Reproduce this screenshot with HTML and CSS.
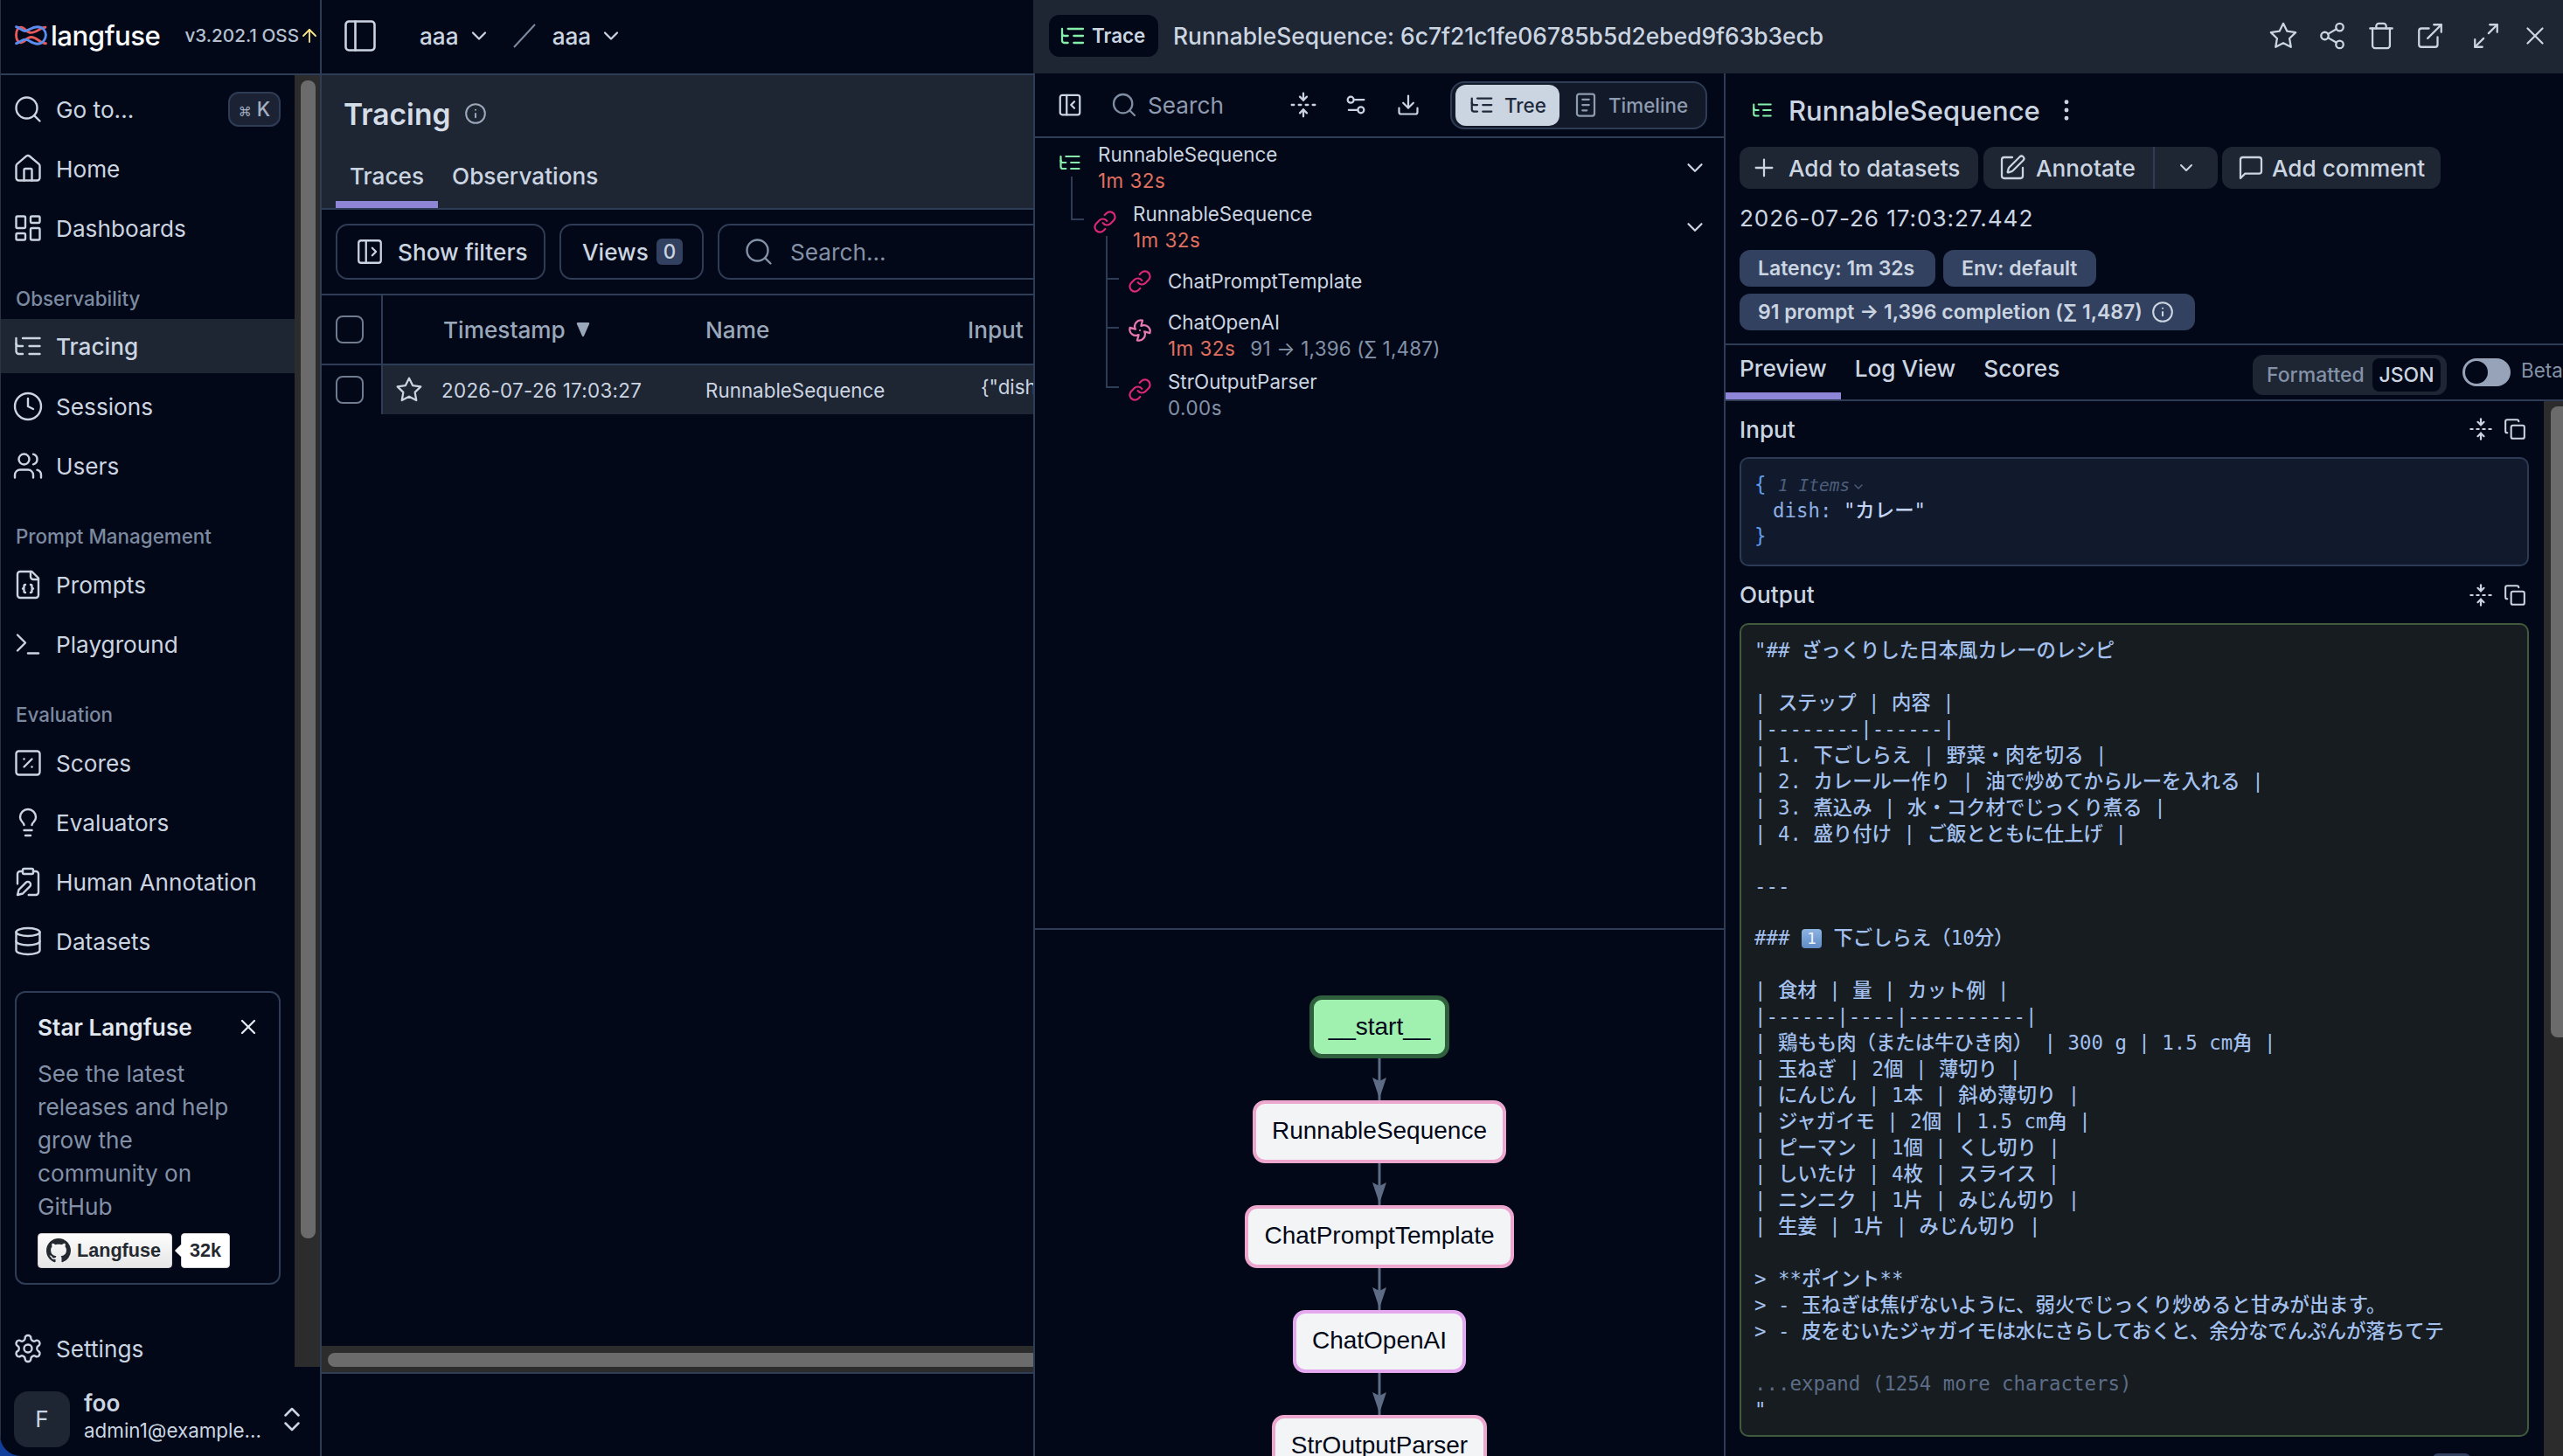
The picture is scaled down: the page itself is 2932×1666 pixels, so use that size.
FILE: index.html
```html
<!DOCTYPE html>
<html lang="en">
<head>
<meta charset="utf-8">
<title>Langfuse Tracing</title>
<link rel="stylesheet" href="styles.css">
</head>
<body>
<svg class="sprite" xmlns="http://www.w3.org/2000/svg">
<symbol id="search" viewBox="0 0 24 24"><circle cx="11" cy="11" r="8"/><path d="m21 21-4.3-4.3"/></symbol>
<symbol id="home" viewBox="0 0 24 24"><path d="M15 21v-8a1 1 0 0 0-1-1h-4a1 1 0 0 0-1 1v8"/><path d="M3 10a2 2 0 0 1 .709-1.528l7-5.999a2 2 0 0 1 2.582 0l7 5.999A2 2 0 0 1 21 10v9a2 2 0 0 1-2 2H5a2 2 0 0 1-2-2z"/></symbol>
<symbol id="dash" viewBox="0 0 24 24"><rect width="7" height="9" x="3" y="3" rx="1"/><rect width="7" height="5" x="14" y="3" rx="1"/><rect width="7" height="9" x="14" y="12" rx="1"/><rect width="7" height="5" x="3" y="16" rx="1"/></symbol>
<symbol id="tree" viewBox="0 0 24 24"><path d="M21 12h-8"/><path d="M21 6H8"/><path d="M21 18h-8"/><path d="M3 6v4c0 1.1.9 2 2 2h3"/><path d="M3 10v6c0 1.1.9 2 2 2h3"/></symbol>
<symbol id="clock" viewBox="0 0 24 24"><circle cx="12" cy="12" r="10"/><path d="M12 6v6l4 2"/></symbol>
<symbol id="users" viewBox="0 0 24 24"><path d="M16 21v-2a4 4 0 0 0-4-4H6a4 4 0 0 0-4 4v2"/><circle cx="9" cy="7" r="4"/><path d="M22 21v-2a4 4 0 0 0-3-3.87"/><path d="M16 3.13a4 4 0 0 1 0 7.75"/></symbol>
<symbol id="filejson" viewBox="0 0 24 24"><path d="M15 2H6a2 2 0 0 0-2 2v16a2 2 0 0 0 2 2h12a2 2 0 0 0 2-2V7Z"/><path d="M14 2v4a2 2 0 0 0 2 2h4"/><path d="M10 12a1 1 0 0 0-1 1v1a1 1 0 0 1-1 1 1 1 0 0 1 1 1v1a1 1 0 0 0 1 1"/><path d="M14 18a1 1 0 0 0 1-1v-1a1 1 0 0 1 1-1 1 1 0 0 1-1-1v-1a1 1 0 0 0-1-1"/></symbol>
<symbol id="terminal" viewBox="0 0 24 24"><path d="m4 17 6-6-6-6"/><path d="M12 19h8"/></symbol>
<symbol id="percent" viewBox="0 0 24 24"><rect width="18" height="18" x="3" y="3" rx="2"/><path d="m15 9-6 6"/><path d="M9 9h.01"/><path d="M15 15h.01"/></symbol>
<symbol id="bulb" viewBox="0 0 24 24"><path d="M15 14c.2-1 .7-1.7 1.5-2.5 1-.9 1.5-2.2 1.5-3.5A6 6 0 0 0 6 8c0 1 .2 2.2 1.5 3.5.7.7 1.3 1.5 1.5 2.5"/><path d="M9 18h6"/><path d="M10 22h4"/></symbol>
<symbol id="clipen" viewBox="0 0 24 24"><rect width="8" height="4" x="8" y="2" rx="1"/><path d="M10.4 12.6a2 2 0 0 1 3 3L8 21l-4 1 1-4Z"/><path d="M16 4h2a2 2 0 0 1 2 2v14a2 2 0 0 1-2 2h-5.5"/><path d="M4 13.5V6a2 2 0 0 1 2-2h2"/></symbol>
<symbol id="db" viewBox="0 0 24 24"><ellipse cx="12" cy="5" rx="9" ry="3"/><path d="M3 5V19A9 3 0 0 0 21 19V5"/><path d="M3 12A9 3 0 0 0 21 12"/></symbol>
<symbol id="gear" viewBox="0 0 24 24"><path d="M12.22 2h-.44a2 2 0 0 0-2 2v.18a2 2 0 0 1-1 1.73l-.43.25a2 2 0 0 1-2 0l-.15-.08a2 2 0 0 0-2.73.73l-.22.38a2 2 0 0 0 .73 2.73l.15.1a2 2 0 0 1 1 1.72v.51a2 2 0 0 1-1 1.74l-.15.09a2 2 0 0 0-.73 2.73l.22.38a2 2 0 0 0 2.73.73l.15-.08a2 2 0 0 1 2 0l.43.25a2 2 0 0 1 1 1.73V20a2 2 0 0 0 2 2h.44a2 2 0 0 0 2-2v-.18a2 2 0 0 1 1-1.73l.43-.25a2 2 0 0 1 2 0l.15.08a2 2 0 0 0 2.73-.73l.22-.39a2 2 0 0 0-.73-2.73l-.15-.08a2 2 0 0 1-1-1.74v-.5a2 2 0 0 1 1-1.74l.15-.09a2 2 0 0 0 .73-2.73l-.22-.38a2 2 0 0 0-2.73-.73l-.15.08a2 2 0 0 1-2 0l-.43-.25a2 2 0 0 1-1-1.73V4a2 2 0 0 0-2-2z"/><circle cx="12" cy="12" r="3"/></symbol>
<symbol id="updown" viewBox="0 0 24 24"><path d="m7 15 5 5 5-5"/><path d="m7 9 5-5 5 5"/></symbol>
<symbol id="panel" viewBox="0 0 24 24"><rect width="18" height="18" x="3" y="3" rx="2"/><path d="M9 3v18"/></symbol>
<symbol id="panelopen" viewBox="0 0 24 24"><rect width="18" height="18" x="3" y="3" rx="2"/><path d="M9 3v18"/><path d="m14 9 3 3-3 3"/></symbol>
<symbol id="panelclose" viewBox="0 0 24 24"><rect width="18" height="18" x="3" y="3" rx="2"/><path d="M9 3v18"/><path d="m16 15-3-3 3-3"/></symbol>
<symbol id="info" viewBox="0 0 24 24"><circle cx="12" cy="12" r="10"/><path d="M12 16v-4"/><path d="M12 8h.01"/></symbol>
<symbol id="chev" viewBox="0 0 24 24"><path d="m6 9 6 6 6-6"/></symbol>
<symbol id="star" viewBox="0 0 24 24"><path d="M12 2l3.09 6.26L22 9.27l-5 4.87 1.18 6.88L12 17.77l-6.18 3.25L7 14.14 2 9.27l6.91-1.01z"/></symbol>
<symbol id="share" viewBox="0 0 24 24"><circle cx="18" cy="5" r="3"/><circle cx="6" cy="12" r="3"/><circle cx="18" cy="19" r="3"/><path d="M8.59 13.51l6.83 3.98"/><path d="M15.41 6.51l-6.82 3.98"/></symbol>
<symbol id="trash" viewBox="0 0 24 24"><path d="M3 6h18"/><path d="M19 6v14c0 1-1 2-2 2H7c-1 0-2-1-2-2V6"/><path d="M8 6V4c0-1 1-2 2-2h4c1 0 2 1 2 2v2"/></symbol>
<symbol id="ext" viewBox="0 0 24 24"><path d="M15 3h6v6"/><path d="M10 14 21 3"/><path d="M18 13v6a2 2 0 0 1-2 2H5a2 2 0 0 1-2-2V8a2 2 0 0 1 2-2h6"/></symbol>
<symbol id="expand" viewBox="0 0 24 24"><path d="M15 3h6v6"/><path d="M9 21H3v-6"/><path d="M21 3l-7 7"/><path d="M3 21l7-7"/></symbol>
<symbol id="x" viewBox="0 0 24 24"><path d="M18 6 6 18"/><path d="m6 6 12 12"/></symbol>
<symbol id="fold" viewBox="0 0 24 24"><path d="M12 22v-6"/><path d="M12 8V2"/><path d="M4 12H2"/><path d="M10 12H8"/><path d="M16 12h-2"/><path d="M22 12h-2"/><path d="m15 19-3-3-3 3"/><path d="m15 5-3 3-3-3"/></symbol>
<symbol id="sliders" viewBox="0 0 24 24"><path d="M20 7h-9"/><path d="M14 17H5"/><circle cx="17" cy="17" r="3"/><circle cx="7" cy="7" r="3"/></symbol>
<symbol id="download" viewBox="0 0 24 24"><path d="M21 15v4a2 2 0 0 1-2 2H5a2 2 0 0 1-2-2v-4"/><path d="m7 10 5 5 5-5"/><path d="M12 15V3"/></symbol>
<symbol id="timeline" viewBox="0 0 24 24"><rect width="16" height="20" x="4" y="2" rx="2"/><path d="M9 7h6"/><path d="M9 12h6"/><path d="M9 17h4"/></symbol>
<symbol id="link" viewBox="0 0 24 24"><path d="M10 13a5 5 0 0 0 7.54.54l3-3a5 5 0 0 0-7.07-7.07l-1.72 1.71"/><path d="M14 11a5 5 0 0 0-7.54-.54l-3 3a5 5 0 0 0 7.07 7.07l1.71-1.71"/></symbol>
<symbol id="fan" viewBox="0 0 24 24"><path d="M10.827 16.379a6.082 6.082 0 0 1-8.618-7.002l5.412 1.45a6.082 6.082 0 0 1 7.002-8.618l-1.45 5.412a6.082 6.082 0 0 1 8.618 7.002l-5.412-1.45a6.082 6.082 0 0 1-7.002 8.618l1.45-5.412Z"/><path d="M12 12v.01"/></symbol>
<symbol id="plus" viewBox="0 0 24 24"><path d="M5 12h14"/><path d="M12 5v14"/></symbol>
<symbol id="pen" viewBox="0 0 24 24"><path d="M12 3H5a2 2 0 0 0-2 2v14a2 2 0 0 0 2 2h14a2 2 0 0 0 2-2v-7"/><path d="M18.375 2.625a1 1 0 0 1 3 3l-9.013 9.014a2 2 0 0 1-.853.505l-2.873.84a.5.5 0 0 1-.62-.62l.84-2.873a2 2 0 0 1 .506-.852z"/></symbol>
<symbol id="msg" viewBox="0 0 24 24"><path d="M21 15a2 2 0 0 1-2 2H7l-4 4V5a2 2 0 0 1 2-2h14a2 2 0 0 1 2 2z"/></symbol>
<symbol id="dots" viewBox="0 0 24 24"><circle cx="12" cy="5" r="1"/><circle cx="12" cy="12" r="1"/><circle cx="12" cy="19" r="1"/></symbol>
<symbol id="copy" viewBox="0 0 24 24"><rect width="14" height="14" x="8" y="8" rx="2"/><path d="M4 16c-1.1 0-2-.9-2-2V4c0-1.1.9-2 2-2h10c1.1 0 2 .9 2 2"/></symbol>
<symbol id="up" viewBox="0 0 24 24"><path d="m5 12 7-7 7 7"/><path d="M12 19V5"/></symbol>
<symbol id="github" viewBox="0 0 16 16"><path d="M8 0C3.58 0 0 3.58 0 8c0 3.54 2.29 6.53 5.47 7.59.4.07.55-.17.55-.38 0-.19-.01-.82-.01-1.49-2.01.37-2.53-.49-2.69-.94-.09-.23-.48-.94-.82-1.13-.28-.15-.68-.52-.01-.53.63-.01 1.08.58 1.23.82.72 1.21 1.87.87 2.33.66.07-.52.28-.87.51-1.07-1.78-.2-3.64-.89-3.64-3.95 0-.87.31-1.59.82-2.15-.08-.2-.36-1.02.08-2.12 0 0 .67-.21 2.2.82.64-.18 1.32-.27 2-.27.68 0 1.36.09 2 .27 1.53-1.04 2.2-.82 2.2-.82.44 1.1.16 1.92.08 2.12.51.56.82 1.27.82 2.15 0 3.07-1.87 3.75-3.65 3.95.29.25.54.73.54 1.48 0 1.07-.01 1.93-.01 2.2 0 .21.15.46.55.38A8.013 8.013 0 0016 8c0-4.42-3.58-8-8-8z"/></symbol>
</svg>

<div class="app">
  <aside class="sidebar">
    <header class="brand">
      <svg class="logo" viewBox="0 0 36 24">
        <path class="logo-red" d="M34 3C28 3 25 9 18 9 13 9 11 3 7 3 3 3 1.500 7 1.500 11.500 1.500 16 3 20 7 20 11 20 13 14 18 14 25 14 28 21 34.500 21"/>
        <path class="logo-blue" d="M1.500 2.500C6 3 8 8 12 7 16 6 19 2.500 25 2.500 31 2.500 34.500 7 34.500 11.500 34.500 16 31 21.500 25 21.500 19 21.500 16 17 12 16.500 8 16 6 20 1.500 21"/>
      </svg>
      <span class="brand-name">langfuse</span>
      <span class="version">v3.202.1 OSS</span>
      <svg class="i version-up"><use href="#up"/></svg>
    </header>
    <div class="side-body">
      <nav class="nav">
        <a class="nav-item"><svg class="i s36"><use href="#search"/></svg><span>Go to...</span><kbd class="kbd"><small>⌘</small> K</kbd></a>
        <a class="nav-item"><svg class="i s36"><use href="#home"/></svg><span>Home</span></a>
        <a class="nav-item"><svg class="i s36"><use href="#dash"/></svg><span>Dashboards</span></a>
        <div class="nav-label">Observability</div>
        <a class="nav-item is-active"><svg class="i s36"><use href="#tree"/></svg><span>Tracing</span></a>
        <a class="nav-item"><svg class="i s36"><use href="#clock"/></svg><span>Sessions</span></a>
        <a class="nav-item"><svg class="i s36"><use href="#users"/></svg><span>Users</span></a>
        <div class="nav-label">Prompt Management</div>
        <a class="nav-item"><svg class="i s36"><use href="#filejson"/></svg><span>Prompts</span></a>
        <a class="nav-item"><svg class="i s36"><use href="#terminal"/></svg><span>Playground</span></a>
        <div class="nav-label">Evaluation</div>
        <a class="nav-item"><svg class="i s36"><use href="#percent"/></svg><span>Scores</span></a>
        <a class="nav-item"><svg class="i s36"><use href="#bulb"/></svg><span>Evaluators</span></a>
        <a class="nav-item"><svg class="i s36"><use href="#clipen"/></svg><span>Human Annotation</span></a>
        <a class="nav-item"><svg class="i s36"><use href="#db"/></svg><span>Datasets</span></a>
        <section class="star-card">
          <div class="star-head"><strong>Star Langfuse</strong><svg class="i s24"><use href="#x"/></svg></div>
          <p class="star-text">See the latest releases and help grow the community on GitHub</p>
          <div class="gh">
            <span class="gh-btn"><svg class="gh-mark"><use href="#github"/></svg>Langfuse</span>
            <span class="gh-count">32k</span>
          </div>
        </section>
        <a class="nav-item nav-settings"><svg class="i s36"><use href="#gear"/></svg><span>Settings</span></a>
      </nav>
      <div class="vscroll side-scroll"><div class="vthumb side-thumb"></div></div>
    </div>
    <footer class="user">
      <span class="avatar">F</span>
      <span class="user-text"><strong>foo</strong><span>admin1@example...</span></span>
      <svg class="i s32 user-chev"><use href="#updown"/></svg>
    </footer>
  </aside>

  <main class="main">
    <div class="topbar">
      <svg class="i s44 topbar-panel"><use href="#panel"/></svg>
      <span class="crumb">aaa</span><svg class="i s28 crumb-chev"><use href="#chev"/></svg>
      <svg class="crumb-slash" viewBox="0 0 26 28"><path d="M1 27 25 1"/></svg>
      <span class="crumb">aaa</span><svg class="i s28 crumb-chev"><use href="#chev"/></svg>
    </div>
    <div class="page-head">
      <div class="page-title"><h1>Tracing</h1><svg class="i s26"><use href="#info"/></svg></div>
      <div class="tabs main-tabs">
        <span class="tab is-on">Traces</span>
        <span class="tab">Observations</span>
      </div>
    </div>
    <div class="toolbar">
      <button class="tool-btn"><svg class="i s34"><use href="#panelopen"/></svg>Show filters</button>
      <button class="tool-btn views">Views<span class="count">0</span></button>
      <div class="tool-search"><svg class="i s36"><use href="#search"/></svg><span>Search...</span></div>
    </div>
    <div class="tr th">
      <div class="c-check"><span class="check"></span></div>
      <div class="c-time">Timestamp<svg class="sort" viewBox="0 0 16 18"><path d="M2 1h12q1.600 0 1.200 1.600L9 16.400q-1 1.600-2 0L.8 2.600Q.4 1 2 1z"/></svg></div>
      <div class="c-name">Name</div>
      <div class="c-input">Input</div>
    </div>
    <div class="tr td">
      <div class="c-check"><span class="check"></span></div>
      <div class="c-time c-row"><svg class="i s32"><use href="#star"/></svg><span class="nums">2026-07-26 17:03:27</span></div>
      <div class="c-name">RunnableSequence</div>
      <div class="c-input c-json">{"dish": "カレー"}</div>
    </div>
    <div class="main-fill"></div>
    <div class="hscroll"><div class="hthumb"></div></div>
    <div class="main-foot"></div>
  </main>

  <section class="trace">
    <header class="trace-head">
      <span class="trace-badge"><svg class="i s32 green"><use href="#tree"/></svg>Trace</span>
      <span class="trace-title">RunnableSequence: 6c7f21c1fe06785b5d2ebed9f63b3ecb</span>
      <div class="trace-actions">
        <svg class="i s34"><use href="#star"/></svg>
        <svg class="i s34"><use href="#share"/></svg>
        <svg class="i s34"><use href="#trash"/></svg>
        <svg class="i s34"><use href="#ext"/></svg>
        <svg class="i s34 gap-wide"><use href="#expand"/></svg>
        <svg class="i s34"><use href="#x"/></svg>
      </div>
    </header>
    <div class="split">
      <div class="tree-col">
        <div class="tree-tools">
          <svg class="i s30"><use href="#panelclose"/></svg>
          <svg class="i s32 tree-search-ic"><use href="#search"/></svg>
          <span class="tree-search">Search</span>
          <svg class="i s32 tt-fold"><use href="#fold"/></svg>
          <svg class="i s28 tt-sliders"><use href="#sliders"/></svg>
          <svg class="i s28 tt-down"><use href="#download"/></svg>
          <div class="seg">
            <span class="seg-item is-on"><svg class="i s30"><use href="#tree"/></svg>Tree</span>
            <span class="seg-item"><svg class="i s30"><use href="#timeline"/></svg>Timeline</span>
          </div>
        </div>
        <div class="tree">
          <div class="node d0">
            <svg class="i s28 green"><use href="#tree"/></svg>
            <div class="node-text"><div>RunnableSequence</div><div class="time">1m 32s</div></div>
            <svg class="i s30 node-chev"><use href="#chev"/></svg>
          </div>
          <div class="node d1">
            <span class="conn conn-1"></span>
            <svg class="i s28 pink"><use href="#link"/></svg>
            <div class="node-text"><div>RunnableSequence</div><div class="time">1m 32s</div></div>
            <svg class="i s30 node-chev"><use href="#chev"/></svg>
          </div>
          <div class="node d2 node-one">
            <span class="conn conn-2"></span>
            <svg class="i s28 pink"><use href="#link"/></svg>
            <div class="node-text"><div>ChatPromptTemplate</div></div>
          </div>
          <div class="node d2">
            <span class="conn conn-3"></span>
            <svg class="i s28 pink-soft"><use href="#fan"/></svg>
            <div class="node-text"><div>ChatOpenAI</div><div><span class="time">1m 32s</span><span class="usage">91 → 1,396 (∑ 1,487)</span></div></div>
          </div>
          <div class="node d2">
            <span class="conn conn-4"></span>
            <svg class="i s28 pink"><use href="#link"/></svg>
            <div class="node-text"><div>StrOutputParser</div><div class="usage-plain">0.00s</div></div>
          </div>
        </div>
        <div class="graph">
          <div class="g-node g-start">__start__</div>
          <svg class="g-arrow" viewBox="0 0 16 48"><path class="g-line" d="M8 0v48"/><path class="g-head" d="M0 22l8 4 8-4-8 24z"/></svg>
          <div class="g-node g-chain">RunnableSequence</div>
          <svg class="g-arrow" viewBox="0 0 16 48"><path class="g-line" d="M8 0v48"/><path class="g-head" d="M0 22l8 4 8-4-8 24z"/></svg>
          <div class="g-node g-chain">ChatPromptTemplate</div>
          <svg class="g-arrow" viewBox="0 0 16 48"><path class="g-line" d="M8 0v48"/><path class="g-head" d="M0 22l8 4 8-4-8 24z"/></svg>
          <div class="g-node g-llm">ChatOpenAI</div>
          <svg class="g-arrow" viewBox="0 0 16 48"><path class="g-line" d="M8 0v48"/><path class="g-head" d="M0 22l8 4 8-4-8 24z"/></svg>
          <div class="g-node g-chain">StrOutputParser</div>
        </div>
      </div>
      <div class="detail">
        <div class="detail-head">
          <div class="d-title"><svg class="i s26 green"><use href="#tree"/></svg><h2>RunnableSequence</h2><svg class="i s32 d-dots"><use href="#dots"/></svg></div>
          <div class="d-btns">
            <button class="d-btn d-btn-add"><svg class="i s32"><use href="#plus"/></svg>Add to datasets</button>
            <div class="d-split">
              <button class="d-btn d-btn-l"><svg class="i s32"><use href="#pen"/></svg>Annotate</button>
              <button class="d-btn d-btn-r"><svg class="i s24"><use href="#chev"/></svg></button>
            </div>
            <button class="d-btn d-btn-c"><svg class="i s32"><use href="#msg"/></svg>Add comment</button>
          </div>
          <div class="d-time">2026-07-26 17:03:27.442</div>
          <div class="badges">
            <span class="badge badge-lat">Latency: 1m 32s</span>
            <span class="badge badge-env">Env: default</span>
          </div>
          <div class="badges badges-2">
            <span class="badge badge-use">91 prompt → 1,396 completion (∑ 1,487)<svg class="i s26"><use href="#info"/></svg></span>
          </div>
        </div>
        <div class="d-tabs">
          <div class="tabs">
            <span class="tab is-on">Preview</span>
            <span class="tab">Log View</span>
            <span class="tab">Scores</span>
          </div>
          <div class="fmt"><span class="fmt-item">Formatted</span><span class="fmt-item is-on">JSON</span></div>
          <span class="switch"><span class="knob"></span></span>
          <span class="beta">Beta</span>
        </div>
        <div class="d-scrollarea">
          <div class="d-content">
            <div class="io-head"><span>Input</span><svg class="i s28"><use href="#fold"/></svg><svg class="i s26 io-copy"><use href="#copy"/></svg></div>
            <div class="io-box io-input"><pre class="code"><span class="j-brace">{</span> <em class="j-items">1 Items</em><svg class="i j-chev"><use href="#chev"/></svg>
<span class="j-key">dish:</span> <span class="j-val">"カレー"</span>
<span class="j-brace">}</span></pre></div>
            <div class="io-head"><span>Output</span><svg class="i s28"><use href="#fold"/></svg><svg class="i s26 io-copy"><use href="#copy"/></svg></div>
            <div class="io-box io-output"><pre class="code code-out">"## ざっくりした日本風カレーのレシピ

| ステップ | 内容 |
|--------|------|
| 1. 下ごしらえ | 野菜・肉を切る |
| 2. カレールー作り | 油で炒めてからルーを入れる |
| 3. 煮込み | 水・コク材でじっくり煮る |
| 4. 盛り付け | ご飯とともに仕上げ |

---

### <span class="keycap">1</span> 下ごしらえ（10分）

| 食材 | 量 | カット例 |
|------|----|----------|
| 鶏もも肉（または牛ひき肉） | 300 g | 1.5 cm角 |
| 玉ねぎ | 2個 | 薄切り |
| にんじん | 1本 | 斜め薄切り |
| ジャガイモ | 2個 | 1.5 cm角 |
| ピーマン | 1個 | くし切り |
| しいたけ | 4枚 | スライス |
| ニンニク | 1片 | みじん切り |
| 生姜 | 1片 | みじん切り |

&gt; **ポイント**
&gt; - 玉ねぎは焦げないように、弱火でじっくり炒めると甘みが出ます。
&gt; - 皮をむいたジャガイモは水にさらしておくと、余分なでんぷんが落ちてテ

<span class="expand">...expand (1254 more characters)</span>
"</pre></div>
            <div class="next-row"><span class="next-pill"></span></div>
          </div>
          <div class="vscroll d-scroll"><div class="vthumb d-thumb"></div></div>
        </div>
      </div>
    </div>
  </section>
</div>
</body>
</html>
```
FILE: styles.css
```css
* { box-sizing: border-box; }
html, body { height: 100%; }
body {
  margin: 0;
  overflow: hidden;
  background: #123f9c;
  font-family: Inter, "Noto Sans CJK JP", sans-serif;
  color: #cbd5e1;
}
.sprite { display: none; }
h1, h2, p { margin: 0; }
button { font: inherit; color: inherit; background: none; border: 0; padding: 0; }

.app {
  display: flex;
  width: 2932px;
  height: 1666px;
  background: #020817;
  border-bottom-left-radius: 24px;
  overflow: hidden;
}

/* icons */
.i { fill: none; stroke: currentColor; stroke-linecap: round; stroke-linejoin: round; flex: none; }
.s24 { width: 24px; height: 24px; stroke-width: 2; }
.s26 { width: 26px; height: 26px; stroke-width: 1.9; }
.s28 { width: 28px; height: 28px; stroke-width: 1.9; }
.s30 { width: 30px; height: 30px; stroke-width: 1.8; }
.s32 { width: 32px; height: 32px; stroke-width: 1.7; }
.s34 { width: 34px; height: 34px; stroke-width: 1.6; }
.s36 { width: 36px; height: 36px; stroke-width: 1.6; }
.s44 { width: 44px; height: 44px; stroke-width: 1.4; }
.green { color: #86efac; }
.pink { color: #db2777; }
.pink-soft { color: #e879b0; }

/* sidebar */
.sidebar {
  width: 368px;
  flex: none;
  display: flex;
  flex-direction: column;
  border-right: 2px solid #2f3c56;
  border-left: 1px solid #2a3346;
}
.brand {
  height: 86px;
  flex: none;
  display: flex;
  align-items: center;
  border-bottom: 2px solid #2f3c56;
  padding: 0 0 3px 16px;
}
.logo { width: 37px; height: 25px; flex: none; fill: none; stroke-width: 2.8; stroke-linecap: round; }
.logo-blue { stroke: #5b8def; }
.logo-red { stroke: #e8595a; }
.brand-name { font-size: 31.2px; font-weight: 500; color: #f8fafc; margin-left: 4px; letter-spacing: -.5px; line-height: 40px; }
.version { font-size: 20.7px; font-weight: 500; color: #b4c0d0; margin-left: 28px; white-space: nowrap; }
.version-up { color: #fde68a; width: 24px; height: 24px; stroke-width: 1.8; }
.side-body { flex: 1; min-height: 0; display: flex; overflow: hidden; }
.nav { flex: 1; min-width: 0; padding-top: 9px; }
.nav-item {
  height: 60px;
  display: flex;
  align-items: center;
  gap: 14px;
  padding-left: 13px;
  margin-bottom: 8px;
  font-size: 26.2px;
  color: #cbd5e1;
}
.nav-item span { white-space: nowrap; }
.nav-item.is-active { background: #1e2533; font-weight: 500; height: 62px; margin-top: -2px; margin-bottom: 8px; }
.kbd {
  margin-left: auto;
  margin-right: 16px;
  width: 60px;
  height: 40px;
  border: 2px solid #2f3c56;
  border-radius: 12px;
  background: #1a2234;
  color: #a3afc2;
  font: 500 22.4px/36px Inter, sans-serif;
  text-align: center;
}
.kbd small { font: 15px "DejaVu Sans", sans-serif; }
.nav-label {
  height: 40px;
  line-height: 40px;
  margin-top: 31px;
  margin-bottom: 5px;
  padding-left: 17px;
  font-size: 22.4px;
  font-weight: 500;
  color: #7c8aa1;
}
.star-card {
  margin: 27px 16px 43px;
  height: 336px;
  border: 2px solid #2f3c56;
  border-radius: 12px;
  padding: 20px 24px 0 24px;
}
.star-head { display: flex; justify-content: space-between; align-items: center; height: 38px; font-size: 26.2px; color: #e2e8f0; }
.star-head strong { font-weight: 600; white-space: nowrap; }
.star-head .i { width: 28px; height: 28px; margin-right: -3px; }
.star-text { margin-top: 16px; font-size: 26.2px; line-height: 38px; color: #8291a8; }
.gh { display: flex; gap: 10px; margin-top: 11px; }
.gh-btn, .gh-count {
  height: 40px;
  display: flex;
  align-items: center;
  border: 1px solid #d5d5d5;
  border-radius: 4px;
  font: 700 21.6px "Liberation Sans", sans-serif;
  color: #24292f;
}
.gh-btn { width: 154px; padding-left: 9px; gap: 7px; background: linear-gradient(#fcfcfc, #e6e6e6); }
.gh-mark { width: 28px; height: 28px; fill: #24292f; }
.gh-count { position: relative; width: 56px; justify-content: center; background: #fff; }
.gh-count::before {
  content: "";
  position: absolute;
  left: -6px;
  top: 14px;
  width: 10px;
  height: 10px;
  background: #fff;
  transform: rotate(45deg);
}
.nav-settings { margin: 0; }
.vscroll { flex: none; background: #2c2c2c; }
.side-scroll { width: 29px; padding: 6px 5px 0 7px; }
.vthumb { background: #6b6b6b; border-radius: 8px 8px 0 0; }
.side-thumb { height: 1325px; border-radius: 8px; }
.user {
  height: 102px;
  flex: none;
  display: flex;
  align-items: center;
  padding: 0 0 0 15px;
}
.avatar {
  width: 64px;
  height: 64px;
  flex: none;
  margin-top: 18px;
  border-radius: 16px;
  background: #1e2533;
  font-size: 26.2px;
  line-height: 64px;
  text-align: center;
  color: #cbd5e1;
}
.user-text { margin-left: 16px; margin-top: 12px; display: flex; flex-direction: column; width: 214px; white-space: nowrap; }
.user-text strong { font-size: 26.2px; line-height: 32px; font-weight: 600; }
.user-text span { font-size: 22.4px; line-height: 30px; }
.user-chev { margin-left: 6px; margin-top: 18px; width: 36px; height: 36px; }

/* main */
.main { width: 814px; flex: none; display: flex; flex-direction: column; overflow: hidden; }
.topbar { height: 86px; flex: none; display: flex; align-items: center; border-bottom: 2px solid #2f3c56; padding: 0 0 2px 22px; }
.topbar-panel { margin-right: 46px; }
.crumb { font-size: 26.2px; font-weight: 500; color: #cbd5e1; }
.crumb-chev { margin-left: 9px; width: 28px; height: 28px; }
.crumb-slash { width: 26px; height: 28px; margin: 0 19px 0 25px; fill: none; stroke: #7d8aa0; stroke-width: 2; }
.page-head { height: 154px; flex: none; background: #1e2533; border-bottom: 2px solid #2f3c56; display: flex; flex-direction: column; }
.page-title { height: 88px; display: flex; align-items: center; gap: 16px; padding-left: 25px; }
.page-title h1 { font-size: 33.6px; font-weight: 600; color: #d5dde8; }
.page-title .i { color: #9aa7ba; }
.tabs { display: flex; }
.main-tabs { margin-left: 16px; height: 64px; }
.tab { padding: 0 16px; height: 62px; line-height: 54px; font-size: 26.2px; font-weight: 500; color: #cbd5e1; border-bottom: 8px solid transparent; white-space: nowrap; }
.tab.is-on { border-bottom-color: #8f85d6; }
.main-tabs .tab { height: 64px; line-height: 56px; }
.toolbar { height: 98px; flex: none; display: flex; align-items: center; gap: 16px; padding-left: 16px; border-bottom: 2px solid #2f3c56; }
.tool-btn { height: 64px; flex: none; display: flex; align-items: center; border: 2px solid #2f3c56; border-radius: 14px; font-size: 26.2px; font-weight: 500; white-space: nowrap; }
.tool-btn { width: 240px; padding-left: 20px; gap: 15px; }
.tool-btn.views { width: 165px; padding-left: 24px; gap: 9px; }
.count { width: 30px; height: 30px; line-height: 30px; text-align: center; border-radius: 6px; background: #334160; font-size: 22.4px; }
.tool-search { height: 64px; width: 500px; flex: none; display: flex; align-items: center; gap: 18px; padding-left: 27px; border: 2px solid #2f3c56; border-radius: 14px; font-size: 26.2px; color: #8492a8; }
.tr { display: flex; flex: none; }
.th { height: 80px; border-bottom: 2px solid #2f3c56; align-items: center; font-size: 26.2px; font-weight: 500; color: #9aa7ba; }
.td { height: 56px; align-items: center; font-size: 22.4px; color: #cbd5e1; }
.c-check { width: 70px; height: 100%; flex: none; display: flex; align-items: center; padding-left: 16px; border-right: 2px solid #2f3c56; }
.check { width: 32px; height: 32px; border: 2px solid #6f7b8f; border-radius: 8px; }
.c-time { width: 369px; height: 100%; flex: none; display: flex; align-items: center; padding-left: 69px; background: inherit; }
.c-name, .c-input { height: 100%; display: flex; align-items: center; white-space: nowrap; }
.c-name { width: 300px; flex: none; }
.sort { width: 16px; height: 18px; margin-left: 12px; fill: #9aa7ba; }
.c-row { padding-left: 14px; gap: 21px; }
.nums { letter-spacing: .3px; }
.td .c-time, .td .c-name, .td .c-input { background: #1e2533; }
.c-input { flex: 1; }
.c-json { padding-left: 15px; padding-bottom: 10px; }
.main-fill { flex: 1; }
.hscroll { height: 30px; flex: none; background: #2c2c2c; padding: 8px 0 0 7px; }
.hthumb { height: 16px; background: #6b6b6b; border-radius: 8px 0 0 8px; }
.main-foot { height: 96px; flex: none; border-top: 2px solid #2f3c56; }

/* trace panel */
.trace { flex: 1; min-width: 0; display: flex; flex-direction: column; border-left: 2px solid #2f3c56; }
.trace-head { height: 84px; flex: none; margin-left: -2px; display: flex; align-items: center; background: #1e2533; padding: 0 0 3px 18px; }
.trace-badge { height: 48px; width: 125px; display: flex; align-items: center; gap: 6px; padding-left: 11px; border-radius: 12px; background: #020817; font-size: 22.4px; font-weight: 600; color: #cbd5e1; }
.trace-title { margin-left: 17px; font-size: 26.4px; font-weight: 500; white-space: nowrap; color: #cbd5e1; }
.trace-actions { margin-left: auto; display: flex; gap: 22px; padding-right: 15px; color: #cbd5e1; align-items: center; }
.trace-actions .gap-wide { margin-left: 8px; }
.split { flex: 1; min-height: 0; display: flex; }
.tree-col { width: 790px; flex: none; display: flex; flex-direction: column; border-right: 2px solid #2f3c56; }
.tree-tools { height: 74px; flex: none; display: flex; align-items: center; padding-left: 25px; border-bottom: 2px solid #2f3c56; color: #cbd5e1; }
.tree-search-ic { margin-left: 31px; color: #7f8da3; }
.tree-search { margin-left: 11px; font-size: 26.2px; color: #8e9bb0; }
.tt-fold { margin-left: 75px; }
.tt-sliders { margin-left: 30px; }
.tt-down { margin-left: 32px; }
.seg { margin-left: auto; margin-right: 19px; width: 294px; height: 55px; display: flex; align-items: center; padding: 0 4px; border: 2px solid #2f3c56; border-radius: 16px; background: #121929; }
.seg-item { height: 47px; display: flex; align-items: center; gap: 11px; font-size: 22.4px; font-weight: 500; color: #8e9bb0; padding-left: 15px; white-space: nowrap; }
.seg-item.is-on { width: 119px; border-radius: 12px; background: #cbd5e1; color: #1e293b; }
.tree { height: 906px; flex: none; padding-top: 4px; border-bottom: 2px solid #2f3c56; }
.node { position: relative; display: flex; align-items: flex-start; min-height: 60px; margin-bottom: 8px; padding-right: 18px; font-size: 22.4px; line-height: 30px; color: #cbd5e1; }
.node > .i:first-of-type { margin-top: 10px; }
.node-one { min-height: 48px; }
.node-one .node-text { padding-top: 9px; }
.node-text { margin-left: 18px; white-space: nowrap; }
.d0 { padding-left: 26px; }
.d1 { padding-left: 66px; }
.d2 { padding-left: 106px; }
.node-chev { margin-left: auto; align-self: center; }
.time { color: #e0705f; letter-spacing: .5px; }
.usage { margin-left: 17px; color: #8492a8; letter-spacing: .2px; }
.usage-plain { color: #8492a8; letter-spacing: .5px; }
.conn { position: absolute; width: 15px; border-left: 2px solid #2f3c56; border-bottom: 2px solid #2f3c56; }
.conn-1 { left: 41px; top: -28px; height: 50px; }
.conn-2 { left: 81px; top: -28px; height: 50px; }
.conn-3 { left: 81px; top: -36px; height: 58px; }
.conn-4 { left: 81px; top: -48px; height: 70px; }
.graph { flex: 1; min-height: 0; overflow: hidden; padding-top: 75px; display: flex; flex-direction: column; align-items: center; }
.g-node { height: 72px; flex: none; padding: 0 18px; border: 4px solid; border-radius: 14px; background: #f3f4f6; font: 28px/62px "Liberation Sans", sans-serif; color: #020817; white-space: nowrap; }
.g-start { background: #a0f0b0; border-color: #2f5f3c; border-width: 5px; padding: 0 17px; }
.g-chain { border-color: #eda7cf; }
.g-llm { border-color: #e4a8ef; }
.g-arrow { width: 16px; height: 48px; flex: none; }
.g-line { stroke: #5d6b85; stroke-width: 3; fill: none; }
.g-head { fill: #5d6b85; }

/* detail */
.detail { flex: 1; min-width: 0; display: flex; flex-direction: column; }
.detail-head { height: 311px; flex: none; padding-left: 16px; border-bottom: 2px solid #2f3c56; }
.d-title { height: 84px; display: flex; align-items: center; padding-left: 13px; }
.d-title h2 { margin-left: 17px; font-size: 31px; font-weight: 500; color: #cbd5e1; white-space: nowrap; }
.d-dots { margin-left: 14px; color: #cbd5e1; }
.d-btns { display: flex; gap: 6px; }
.d-btn { height: 48px; display: flex; align-items: center; border-radius: 12px; background: #1e2533; font-size: 26.2px; font-weight: 500; color: #cbd5e1; white-space: nowrap; }
.d-btn-add { width: 273px; gap: 12px; padding-left: 12px; }
.d-split { display: flex; }
.d-btn-l { width: 196px; gap: 11px; padding-left: 17px; border-radius: 12px 0 0 12px; border-right: 2px solid #2f3c56; }
.d-btn-r { width: 72px; justify-content: center; border-radius: 0 12px 12px 0; }
.d-btn-c { width: 250px; gap: 8px; padding-left: 17px; margin-left: -1px; }
.d-time { height: 70px; line-height: 68px; font-size: 26.2px; letter-spacing: .9px; color: #cbd5e1; }
.badges { display: flex; gap: 9px; }
.badges-2 { margin-top: 8px; }
.badge { height: 42px; display: flex; align-items: center; gap: 10px; padding-left: 21px; border-radius: 12px; background: #334160; font-size: 23px; font-weight: 600; color: #cbd5e1; white-space: nowrap; }
.badge-lat { width: 224px; }
.badge-env { width: 175px; }
.badge-use { width: 521px; }
.d-tabs { height: 64px; flex: none; display: flex; align-items: flex-start; border-bottom: 2px solid #2f3c56; }
.d-tabs .tabs { margin-right: auto; }
.fmt { margin-top: 11px; width: 222px; height: 46px; display: flex; align-items: center; padding: 0 7px 0 16px; border-radius: 12px; background: #1e2533; font-size: 23px; font-weight: 500; color: #8492a8; }
.fmt-item { white-space: nowrap; }
.fmt-item.is-on { margin-left: auto; width: 78px; height: 38px; line-height: 38px; text-align: center; border-radius: 8px; background: #020817; color: #cbd5e1; }
.switch { margin: 15px 0 0 18px; width: 55px; height: 32px; flex: none; padding: 3px; border-radius: 16px; background: #96a3b8; }
.knob { display: block; width: 26px; height: 26px; border-radius: 50%; background: #020817; }
.beta { margin: 15px 0 0 12px; width: 48px; overflow: hidden; font-size: 22.4px; color: #8492a8; }
.d-scrollarea { flex: 1; min-height: 0; display: flex; overflow: hidden; }
.d-content { flex: 1; min-width: 0; padding: 0 17px 0 16px; }
.io-head { height: 64px; display: flex; align-items: center; font-size: 26.2px; font-weight: 500; color: #cbd5e1; }
.io-head span { margin-right: auto; }
.io-copy { margin-left: 12px; margin-right: 3px; }
.io-box { border: 2px solid; border-radius: 10px; padding: 15px 15px; }
.io-input { height: 125px; background: #111a2d; border-color: #2c3a55; }
.io-input + .io-head { height: 65px; }
.io-output { height: 931px; background: #161c20; border-color: #3f5a3c; }
.code { margin: 0; font: 500 22.4px/29px "DejaVu Sans Mono", "Noto Sans CJK JP", monospace; color: #93b4e3; white-space: pre; }
.code-out { line-height: 29.96px; color: #a3c0ee; overflow: hidden; }
.j-brace { color: #5f9be8; }
.j-items { color: #4d5e7c; font-style: italic; font-size: 19.5px; }
.j-chev { width: 16px; height: 16px; stroke-width: 2; color: #4d5e7c; margin-left: 2px; vertical-align: -3px; }
.j-key { margin-left: 21px; color: #8fb0e4; }
.j-val { color: #c3d5f2; }
.keycap { display: inline-block; width: 23px; height: 22px; line-height: 22px; text-align: center; border-radius: 4px; background: linear-gradient(#8db3e2, #5f8cc6); color: #eef3fb; font-size: 18px; vertical-align: 1px; }
.expand { color: #5d6d87; }
.next-row { display: flex; justify-content: flex-end; margin-top: 19px; padding-right: 67px; }
.next-pill { width: 43px; height: 12px; border-radius: 6px; background: #334160; }
.d-scroll { width: 22px; padding: 6px 0 0 8px; }
.d-thumb { height: 722px; border-radius: 8px 0 0 8px; }
```
